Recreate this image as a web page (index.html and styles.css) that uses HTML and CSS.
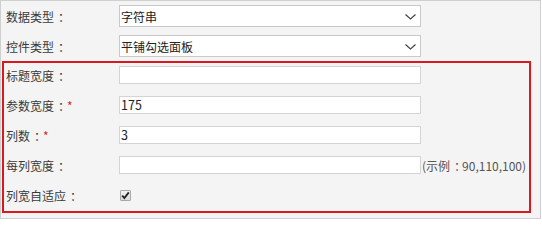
FILE: index.html
```html
<!DOCTYPE html>
<html lang="zh-CN">
<head>
<meta charset="utf-8">
<title>参数设置</title>
<link rel="stylesheet" href="styles.css">
</head>
<body>
<div class="frame">
  <div class="row">
    <span class="label">数据类型<span class="c">：</span></span>
    <div class="select"><span class="select-text">字符串</span>
      <svg class="chev" width="11" height="6" viewBox="0 0 11 6"><path d="M0.5 0.5 L5.5 5 L10.5 0.5" fill="none" stroke="#444" stroke-width="1.2"/></svg>
    </div>
  </div>
  <div class="row">
    <span class="label">控件类型<span class="c">：</span></span>
    <div class="select"><span class="select-text">平铺勾选面板</span>
      <svg class="chev" width="11" height="6" viewBox="0 0 11 6"><path d="M0.5 0.5 L5.5 5 L10.5 0.5" fill="none" stroke="#444" stroke-width="1.2"/></svg>
    </div>
  </div>
  <div class="group">
    <div class="rows">
      <div class="row">
        <span class="label">标题宽度<span class="c">：</span></span>
        <div class="input"></div>
      </div>
      <div class="row">
        <span class="label">参数宽度<span class="c">：</span><span class="req">*</span></span>
        <div class="input">175</div>
      </div>
      <div class="row">
        <span class="label">列数<span class="c">：</span><span class="req">*</span></span>
        <div class="input">3</div>
      </div>
      <div class="row">
        <span class="label">每列宽度<span class="c">：</span></span>
        <div class="input"></div>
        <span class="hint">(示例<span class="c">：</span>90,110,100)</span>
      </div>
      <div class="row">
        <span class="label">列宽自适应<span class="c">：</span></span>
        <span class="check">
          <svg width="9" height="9" viewBox="0 0 9 9"><path d="M1.2 4.6 L3.4 7 L7.8 1.4" fill="none" stroke="#222" stroke-width="1.8"/></svg>
        </span>
      </div>
    </div>
  </div>
</div>
</body>
</html>
```
FILE: styles.css
```css
html, body {
  margin: 0;
  padding: 0;
}
body {
  background: #fff;
  font-family: "Noto Sans CJK SC", "Noto Sans", sans-serif;
  font-size: 12px;
  color: #333;
}
.frame {
  box-sizing: border-box;
  width: 541px;
  height: 219px;
  border: 1px solid #cfcfcf;
  background: #f4f4f4;
}
.c {
  padding-left: 4px;
  letter-spacing: -4px;
}
.row {
  display: flex;
  align-items: center;
  height: 30px;
}
.label {
  box-sizing: border-box;
  width: 118px;
  padding-left: 5px;
  flex: none;
  white-space: nowrap;
  color: #3a3a3a;
}
.req {
  color: #e0262b;
  margin-left: 1px;
}
.select {
  box-sizing: border-box;
  width: 302px;
  height: 22px;
  border: 1px solid #c9c9c9;
  background: #fff;
  display: flex;
  align-items: center;
  justify-content: space-between;
  padding: 0 4px 0 1px;
  color: #222;
}
.chev {
  display: block;
  margin-top: 1px;
}
.group {
  box-sizing: border-box;
  margin: 0 9px 0 1px;
  height: 152px;
  border: 2px solid #d71920;
}
.rows {
  margin-top: -3px;
}
.group .label {
  width: 115px;
  padding-left: 2px;
}
.input {
  box-sizing: border-box;
  width: 302px;
  height: 18px;
  border: 1px solid #d4d4d4;
  background: #fff;
  line-height: 16px;
  padding-left: 1px;
  color: #222;
  font-size: 12.5px;
}
.hint {
  margin-left: 1px;
  color: #555;
  white-space: nowrap;
}
.check {
  box-sizing: border-box;
  width: 11px;
  height: 11px;
  margin-left: 1px;
  border: 1px solid #a9a9a9;
  border-radius: 1px;
  background: linear-gradient(#f2f2f2, #dcdcdc);
  display: flex;
  align-items: center;
  justify-content: center;
}
.check svg {
  display: block;
}
```
